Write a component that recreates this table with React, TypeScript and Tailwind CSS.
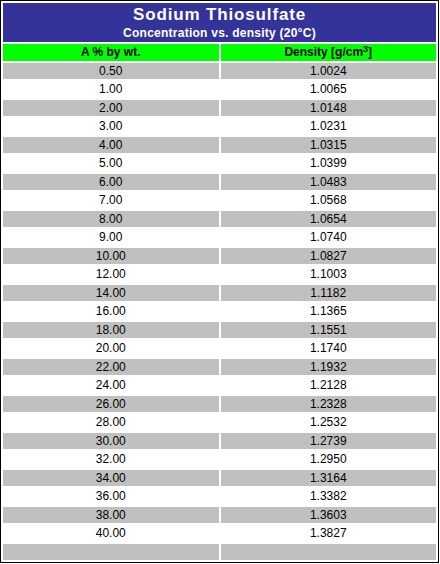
const ROWS: [string, string][] = [
  ["0.50", "1.0024"],
  ["1.00", "1.0065"],
  ["2.00", "1.0148"],
  ["3.00", "1.0231"],
  ["4.00", "1.0315"],
  ["5.00", "1.0399"],
  ["6.00", "1.0483"],
  ["7.00", "1.0568"],
  ["8.00", "1.0654"],
  ["9.00", "1.0740"],
  ["10.00", "1.0827"],
  ["12.00", "1.1003"],
  ["14.00", "1.1182"],
  ["16.00", "1.1365"],
  ["18.00", "1.1551"],
  ["20.00", "1.1740"],
  ["22.00", "1.1932"],
  ["24.00", "1.2128"],
  ["26.00", "1.2328"],
  ["28.00", "1.2532"],
  ["30.00", "1.2739"],
  ["32.00", "1.2950"],
  ["34.00", "1.3164"],
  ["36.00", "1.3382"],
  ["38.00", "1.3603"],
  ["40.00", "1.3827"],
  ["", ""],
];

const cell = "text-[12px] leading-none text-black flex items-center justify-center";

export default function App() {
  return (
    <div className="w-[440px] h-[564px] bg-white font-['Liberation_Sans',Arial,sans-serif]">
      <div className="w-[439px] h-[563px] border border-black p-[2px] flex flex-col gap-[2px]">
        <div className="h-[39px] shrink-0 bg-[#333399] text-white flex flex-col items-center justify-center font-bold leading-none">
          <div className="text-[17px] tracking-[0.85px]">Sodium Thiosulfate</div>
          <div className="text-[12px] tracking-[0.25px] mt-[4px]">Concentration vs. density (20°C)</div>
        </div>
        <div className="flex-1 min-h-0 grid grid-cols-2 gap-[2px]">
          <div className={"bg-[#00ff00] font-bold " + cell}>A % by wt.</div>
          <div className={"bg-[#00ff00] font-bold " + cell}>
            <span>
              Density [g/cm<sup className="text-[9px]">3</sup>]
            </span>
          </div>
        </div>
        {ROWS.map(([a, d], i) => (
          <div key={i} className="flex-1 min-h-0 grid grid-cols-2 gap-[2px]">
            <div className={(i % 2 === 0 ? "bg-[#c0c0c0] " : "bg-white ") + cell}>{a}</div>
            <div className={(i % 2 === 0 ? "bg-[#c0c0c0] " : "bg-white ") + cell}>{d}</div>
          </div>
        ))}
      </div>
    </div>
  );
}
